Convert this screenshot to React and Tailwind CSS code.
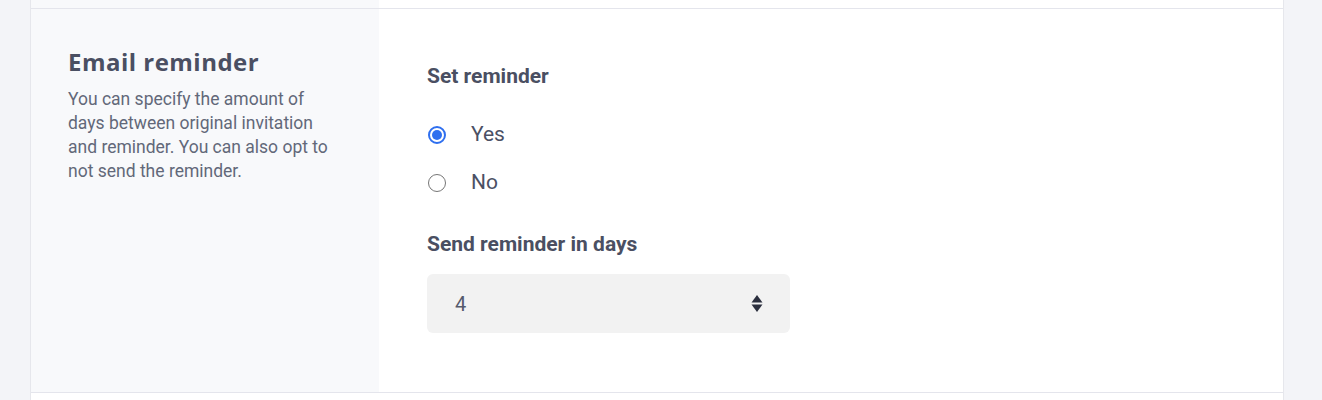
export default function App() {
  return (
    <div className="w-[1322px] h-[400px] overflow-hidden bg-[#f3f4f8]" style={{ fontFamily: "Roboto, 'Liberation Sans', sans-serif" }}>
      <div className="mx-[30px] w-[1254px] h-full border-x border-[#e6e7ec] bg-white flex flex-col">
        <div className="h-[9px] flex border-b border-[#e4e5ec] shrink-0">
          <div className="w-[348px] bg-[#f8f9fb]" />
          <div className="flex-1 bg-white" />
        </div>
        <div className="h-[384px] flex border-b border-[#e4e5ec] shrink-0">
          <div className="w-[348px] bg-[#f8f9fb] pl-[37px] pt-[38px]">
            <h2 className="text-[24px] leading-[30px] font-bold tracking-[0.02em] text-[#4a4f62]" style={{ fontFamily: "'Open Sans', 'Noto Sans', sans-serif" }}>
              Email reminder
            </h2>
            <p className="mt-[10px] w-[272px] text-[17.5px] leading-[24px] text-[#626879]">
              You can specify the amount of days between original invitation and reminder. You can also opt to not send the reminder.
            </p>
          </div>
          <div className="flex-1 pl-[48px] pt-[55px]">
            <div className="text-[21px] leading-[24px] font-bold text-[#4a4f62]">Set reminder</div>
            <div className="mt-[35px] flex flex-col gap-[24px]">
              <label className="flex items-center h-[24px]">
                <span className="w-[18px] h-[18px] rounded-full border-[2px] border-[#2f6fef] flex items-center justify-center ml-[1px]">
                  <span className="w-[10px] h-[10px] rounded-full bg-[#2f6fef]" />
                </span>
                <span className="ml-[25px] text-[21px] text-[#4b5064]">Yes</span>
              </label>
              <label className="flex items-center h-[24px]">
                <span className="w-[18px] h-[18px] rounded-full border-[1.5px] border-[#767676] ml-[1px]" />
                <span className="ml-[25px] text-[21px] text-[#4b5064]">No</span>
              </label>
            </div>
            <div className="mt-[37px] text-[21px] leading-[24px] font-bold text-[#4a4f62]">Send reminder in days</div>
            <div className="mt-[18px] w-[363px] h-[59px] rounded-[6px] bg-[#f2f2f2] flex items-center pl-[28px] pr-[27px]">
              <span className="flex-1 text-[20px] text-[#555a6c]">4</span>
              <svg width="12" height="19" viewBox="0 0 12 19" className="text-[#2b2f3e]">
                <path d="M6 1 L11.5 8.5 H0.5 Z" fill="currentColor" />
                <path d="M6 18 L11.5 10.5 H0.5 Z" fill="currentColor" />
              </svg>
            </div>
          </div>
        </div>
        <div className="flex-1 bg-white" />
      </div>
    </div>
  );
}
